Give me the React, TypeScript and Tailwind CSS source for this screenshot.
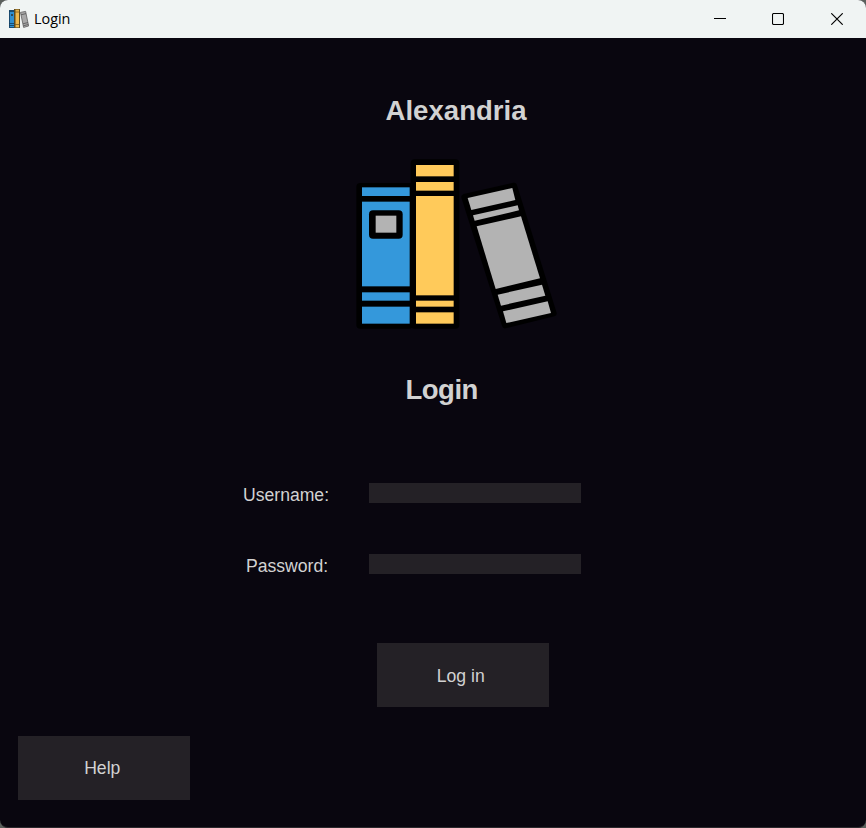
const bookPaths = {
  blue: [
    [51, 112, 143, 26],
    [51, 155, 143, 254],
    [51, 427, 143, 25],
    [51, 470, 143, 51],
  ],
  yellow: [
    [213, 45, 113, 34],
    [213, 96, 113, 26],
    [213, 138, 113, 298],
    [213, 452, 113, 18],
    [213, 487, 113, 34],
  ],
  grey: [
    "53,144 187,114 196,150 64,180",
    "69,196 203,166 207,181 74,212",
    "80,229 213,199 270,385 137,417",
    "143,434 276,404 286,437 153,467",
    "159,484 293,454 303,489 169,519",
  ],
};

function Books({ className }: { className: string }) {
  return (
    <svg className={className} viewBox="0 0 675 570" aria-hidden="true">
      <rect x="34" y="99" width="170" height="437" rx="12" fill="#000" />
      <rect x="197" y="28" width="146" height="508" rx="12" fill="#000" />
      {bookPaths.blue.map(([x, y, w, h]) => (
        <rect key={y} x={x} y={y} width={w} height={h} fill="#3498db" />
      ))}
      {bookPaths.yellow.map(([x, y, w, h]) => (
        <rect key={y} x={x} y={y} width={w} height={h} fill="#ffca5a" />
      ))}
      <rect x="72" y="181" width="101" height="85" rx="12" fill="#000" />
      <rect x="92" y="197" width="62" height="51" fill="#b3b3b3" />
      <g transform="translate(315 0)">
        <polygon
          points="43,141 192,107 311,490 165,526"
          fill="#000"
          stroke="#000"
          strokeWidth="18"
          strokeLinejoin="round"
        />
        {bookPaths.grey.map((p) => (
          <polygon key={p} points={p} fill="#b3b3b3" />
        ))}
      </g>
    </svg>
  );
}

/* Small version of the logo for the title bar, with thinner outlines. */
function BooksIcon() {
  return (
    <svg className="h-5 w-5" viewBox="0 0 20 20" aria-hidden="true">
      <rect x="0" y="1" width="6" height="18" fill="#1a4a70" />
      <rect x="1" y="2" width="4" height="16" fill="#2f8fd0" />
      <path d="M0 2.5h6M0 14.5h6M0 16.5h6" stroke="#123c5c" strokeWidth=".8" />
      <rect x="2" y="5" width="2" height="2" fill="#2c4a5c" />
      <rect x="5" y="0" width="6" height="19" fill="#5c4a20" />
      <rect x="6.5" y="0" width="3.5" height="18.4" fill="#eeb84c" />
      <path d="M6 .6h4.5M6 3h4.5M6 15.5h4.5" stroke="#7a5c22" strokeWidth=".8" />
      <path d="M11.5 3.4L16.6 2.4 19.6 17 14.6 18.4z" fill="#a9a9a9" stroke="#6a6a6a" strokeWidth=".9" />
      <path d="M12 5.8l5-1.2M14 14.8l5-1.3M14.3 16.8l5-1.3" stroke="#555" strokeWidth=".8" />
    </svg>
  );
}

function TitleBar() {
  return (
    <header className="flex h-[38px] shrink-0 items-center bg-[#f0f4f3] pl-[9px] text-black">
      <BooksIcon />
      <span className="ml-[5px] font-['Open_Sans','Noto_Sans',sans-serif] text-[14.4px] leading-5">
        Login
      </span>
      <div className="ml-auto flex">
        <button className="flex w-[58px] items-center justify-center" aria-label="Minimize">
          <svg className="h-3 w-3" viewBox="0 0 12 12">
            <path d="M0 5.5h12" stroke="#000" />
          </svg>
        </button>
        <button className="flex w-[58px] items-center justify-center" aria-label="Maximize">
          <svg className="h-3 w-3" viewBox="0 0 12 12">
            <rect x=".5" y=".5" width="11" height="11" rx="1.2" fill="none" stroke="#000" strokeWidth="1.1" />
          </svg>
        </button>
        <button className="flex w-[59px] items-center justify-center" aria-label="Close">
          <svg className="h-3 w-3" viewBox="0 0 12 12">
            <path d="M.3.3l11.4 11.4M11.7.3L.3 11.7" stroke="#000" strokeWidth="1.15" />
          </svg>
        </button>
      </div>
    </header>
  );
}

export default function App() {
  return (
    <div className="h-[828px] w-[866px] bg-[#5b605c]">
      <div className="flex h-full flex-col overflow-hidden rounded-[8px] border-b border-[#2b292d] bg-[#09060f] font-['Liberation_Sans',Arial,sans-serif] text-[#d2d2d2]">
        <TitleBar />
        <main className="flex flex-1 flex-col items-start">
          <h1 className="mt-[57px] ml-[385.5px] text-[27.6px] leading-8 font-bold">Alexandria</h1>
          <Books className="mt-[23px] ml-[345px] h-[190px] w-[225px] shrink-0" />
          <h2 className="mt-[34px] ml-[405.5px] text-[27.5px] leading-8 font-bold tracking-[-0.5px]">
            Login
          </h2>
          <form className="mt-[77px] flex flex-col">
            <label className="flex h-5 items-center">
              <span className="ml-[243px] w-[126px] pt-[3px] text-[17.6px] leading-5">Username:</span>
              <input className="h-5 w-[212px] bg-[#242126] outline-none" />
            </label>
            <label className="mt-[51px] flex h-5 items-center">
              <span className="ml-[246px] w-[123px] pt-[3px] text-[17.6px] leading-5">Password:</span>
              <input type="password" className="h-5 w-[212px] bg-[#242126] outline-none" />
            </label>
            <button
              type="button"
              className="mt-[69px] ml-[376.5px] h-16 w-[172.5px] bg-[#242126] pt-[2px] pr-[4px] text-[17.6px]"
            >
              Log in
            </button>
          </form>
          <button className="mt-[28.5px] ml-[17.5px] h-16 w-[172.5px] shrink-0 bg-[#242126] pt-[2px] pr-[3px] text-[17.6px]">
            Help
          </button>
        </main>
      </div>
    </div>
  );
}
